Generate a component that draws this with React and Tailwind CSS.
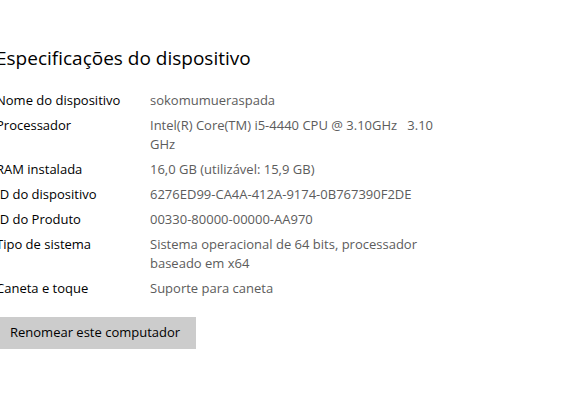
const specs = [
  { label: 'Nome do dispositivo', value: 'sokomumueraspada' },
  { label: 'Processador', value: 'Intel(R) Core(TM) i5-4440 CPU @ 3.10GHz   3.10 GHz' },
  { label: 'RAM instalada', value: '16,0 GB (utilizável: 15,9 GB)' },
  { label: 'ID do dispositivo', value: '6276ED99-CA4A-412A-9174-0B767390F2DE' },
  { label: 'ID do Produto', value: '00330-80000-00000-AA970' },
  { label: 'Tipo de sistema', value: 'Sistema operacional de 64 bits, processador baseado em x64' },
  { label: 'Caneta e toque', value: 'Suporte para caneta' },
];

export default function App() {
  return (
    <div className="w-[571px] h-[408px] overflow-hidden bg-white font-['Open_Sans',sans-serif] text-black">
      <div className="-ml-[4px] pt-[44px]">
        <h1 className="text-[19px] leading-[28px] font-normal">Especificações do dispositivo</h1>
        <div className="mt-[19px] flex flex-col gap-[6px] text-[13px] leading-[19px]">
          {specs.map((s) => (
            <div key={s.label} className="flex">
              <div className="w-[154px] shrink-0">{s.label}</div>
              <div className="w-[295px] text-[#5c5c5c] whitespace-pre-wrap">{s.value}</div>
            </div>
          ))}
        </div>
        <button className="mt-[19px] ml-[4px] h-[32px] w-[196px] bg-[#cccccc] pl-[10px] text-left text-[13px] text-black">
          Renomear este computador
        </button>
      </div>
    </div>
  );
}
